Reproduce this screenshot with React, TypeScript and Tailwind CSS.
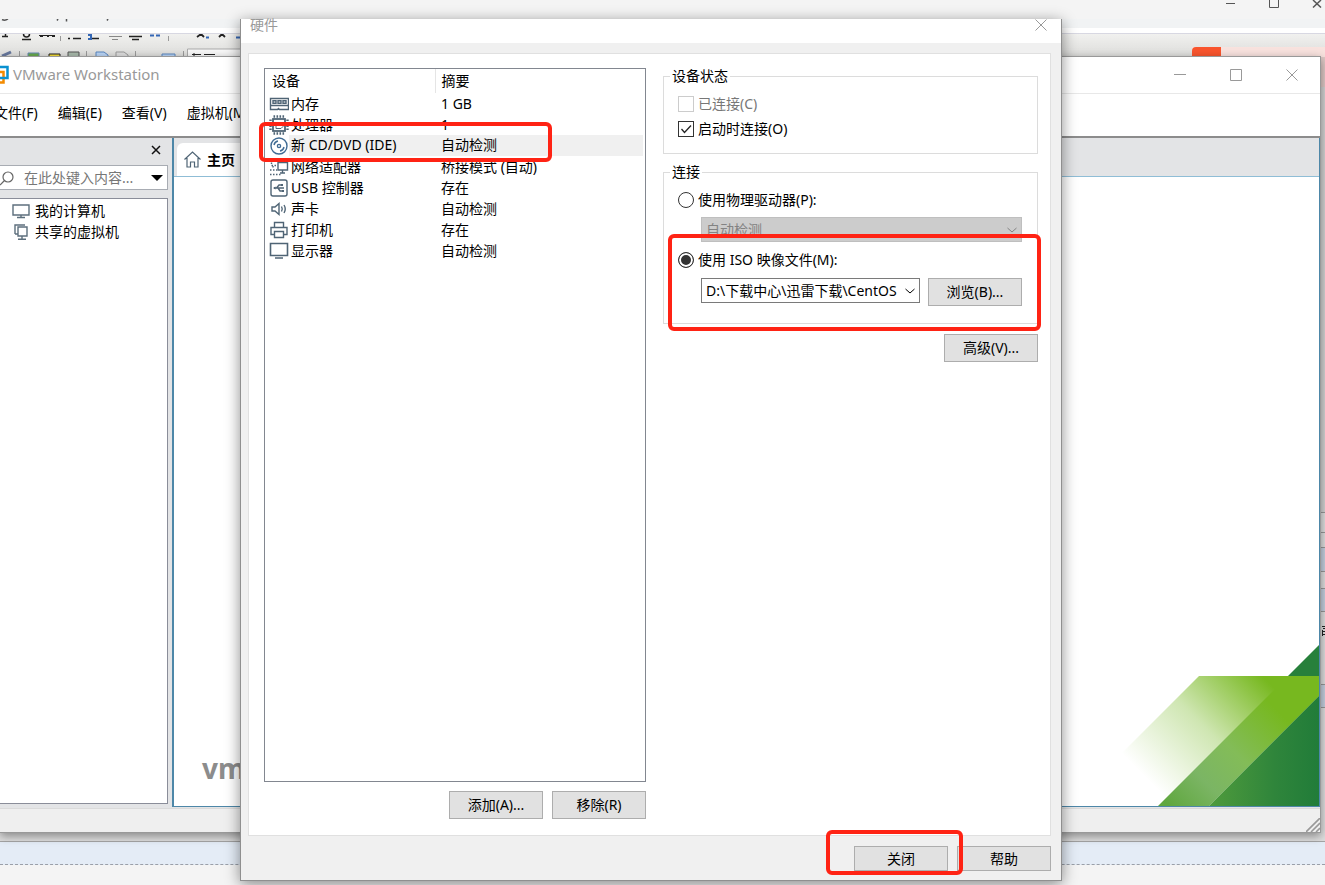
import type { ReactNode } from "react";

type Device = { name: string; summary: string; icon: ReactNode };

function Icon({ children }: { children: ReactNode }) {
  return (
    <svg
      className="w-5 h-5 shrink-0"
      viewBox="0 0 20 20"
      fill="none"
      stroke="#4f6475"
      strokeWidth="1.4"
    >
      {children}
    </svg>
  );
}

const devices: Device[] = [
  {
    name: "内存",
    summary: "1 GB",
    icon: (
      <Icon>
        <path d="M1.5 4.5h18v7h-18zM1.5 11.5v4h7l1-1 1 1h9v-4" />
        <path d="M4 6.7h3v2.6H4zM9 6.7h3v2.6H9zM14 6.7h3v2.6h-3z" />
      </Icon>
    ),
  },
  {
    name: "处理器",
    summary: "1",
    icon: (
      <Icon>
        <rect x="4" y="4" width="12" height="12" strokeWidth="1.8" />
        <path d="M7 7.5h7v4l-2 2H7z" strokeWidth="1" />
        <path
          d="M4.5 1.5h12M4.5 18.5h12M1.5 4.5v12M18.5 4.5v12"
          strokeWidth="2.4"
          strokeDasharray="1.6 1.4"
        />
      </Icon>
    ),
  },
  {
    name: "新 CD/DVD (IDE)",
    summary: "自动检测",
    icon: (
      <Icon>
        <circle cx="10" cy="10" r="8" stroke="#3f6b94" />
        <circle cx="10" cy="10" r="1.6" stroke="#3f6b94" />
        <path d="M5 9a5 5 0 0 1 4-4M11 15a5 5 0 0 0 4-4" stroke="#3f6b94" />
      </Icon>
    ),
  },
  {
    name: "网络适配器",
    summary: "桥接模式 (自动)",
    icon: (
      <Icon>
        <path d="M9 5.5h9.500v7.500h-9.500zM13.500 13v3M11 16h5" />
        <path d="M2.500 2.500h9v3M2.500 2.500v6h6" strokeDasharray="1.5 1.5" />
        <path d="M4 9v2M1 13h7M1 17.500h11" strokeDasharray="1.5 1.5" />
      </Icon>
    ),
  },
  {
    name: "USB 控制器",
    summary: "存在",
    icon: (
      <Icon>
        <rect x="2" y="2" width="16" height="16" rx="2" />
        <path d="M5 10h10M7.5 10l2.5-3h2.500M9 10l2 3h2.500" />
        <path d="M4 10l2.500-1.500v3zM12 6h2v2h-2zM13 12h2v2h-2z" fill="#4f6475" stroke="none" />
      </Icon>
    ),
  },
  {
    name: "声卡",
    summary: "自动检测",
    icon: (
      <Icon>
        <path d="M3 8h3l4-3.500v11L6 12H3zM12.500 7.500q1.500 2.500 0 5M15 6q2.500 4 0 8" />
      </Icon>
    ),
  },
  {
    name: "打印机",
    summary: "存在",
    icon: (
      <Icon>
        <path d="M5.500 7.500v-5h9v5M5.500 14.500h-3.500v-7h16v7h-3.500M5.500 11.500h9v6h-9z" />
      </Icon>
    ),
  },
  {
    name: "显示器",
    summary: "自动检测",
    icon: (
      <Icon>
        <path d="M1.500 2.500h17v12h-17zM6 17h8" strokeWidth="1.600" />
      </Icon>
    ),
  },
];

function PushButton({
  children,
  small = false,
}: {
  children: ReactNode;
  small?: boolean;
}) {
  return (
    <button
      className={`w-[94px] shrink-0 bg-[#e1e1e1] border border-[#adadad] flex items-center justify-center ${
        small ? "h-[25px]" : "h-7"
      }`}
    >
      {children}
    </button>
  );
}

function Chevron() {
  return (
    <svg
      className="absolute right-1 top-[9px] w-3 h-2 pointer-events-none"
      viewBox="0 0 12 8"
      fill="none"
      stroke="currentColor"
    >
      <path d="M1.500 2l4.500 4 4.500-4" />
    </svg>
  );
}

function Cross({ className }: { className: string }) {
  return (
    <svg className={className} viewBox="0 0 12 12" fill="none" stroke="currentColor">
      <path d="M0.500 0.500l11 11M11.500 0.500l-11 11" />
    </svg>
  );
}

// Browser page and editor toolbar behind the windows
function Backdrop() {
  return (
    <div className="h-screen flex flex-col bg-[#dedede]">
      <div className="h-[19px] shrink-0 bg-[#f4f4f4] flex justify-end gap-8 pr-[3px] text-[#555] overflow-hidden">
        <button aria-label="最小化" className="h-[7px]">
          <svg className="w-3 h-[7px]" viewBox="0 0 12 7">
            <path d="M2 3.500h9" stroke="currentColor" />
          </svg>
        </button>
        <button aria-label="最大化" className="h-2">
          <svg className="w-3 h-2" viewBox="0 0 12 8" fill="none" stroke="currentColor">
            <path d="M1.500 0v7.500h9v-7.500" />
          </svg>
        </button>
        <button aria-label="关闭" className="h-2">
          <svg className="w-[10px] h-2" viewBox="0 0 10 8" stroke="currentColor" strokeWidth="1.500">
            <path d="M1 0l8 7.500M9 0l-8 7.500" />
          </svg>
        </button>
      </div>
      <div className="h-[9px] shrink-0 bg-[#f1f3f4]">
        <svg className="block w-32 h-1" viewBox="0 0 128 4" fill="none" stroke="#555" strokeWidth="1.500">
          <path d="M2 0.500q3 1.500 6-0.500M58 0l-1 1.500M66.500 0v2.500M108 0l-1 1.500" />
        </svg>
      </div>
      <div className="h-[6px] shrink-0 bg-white border-b border-[#d8d8e2]" />
      <div className="h-[23px] shrink-0 bg-linear-to-b from-[#f1f1ef] to-[#dcdcda] flex justify-between">
        <svg className="w-[241px] h-[23px]" viewBox="0 0 241 23" fill="none" stroke="#222">
          <path d="M2 2.500h6M5.500 0v3M23.500 0q0 3 3 3t3-3M22 5.500h9" strokeWidth="1.500" />
          <path d="M39 1.500h16M40 2.500h3M47 2.500h2M52 2.500h3" />
          <path d="M60.500 2v5M168.500 2v5M86.500 17v6M135.500 17v6M183.500 17v6M19.500 17v6" stroke="#999" />
          <path d="M68 4.500h2M73 4.500h8M90 4.500h9M129 2.500h13M132 5.500h7" strokeWidth="1.500" />
          <path d="M109 2.500h13M112 5.500h6" stroke="#888" />
          <path d="M197 3l4-3M204 3l-3-3M219 3l3-3 3 3" strokeWidth="1.800" />
          <path d="M88 1h3v4h-3M150 1.500h4M156 1.500h4M206 3.500h3M236 3.500h5" stroke="#3467b5" strokeWidth="2" />
          <path d="M2 22l9-4" stroke="#66779c" strokeWidth="3" />
          <path d="M28 19h11v4h-11z" fill="#67a94b" stroke="#6688b4" />
          <path d="M49 20h11v3h-11z" fill="#f4dc39" />
          <path d="M68 18h11v5h-11z" fill="#a8b9ab" stroke="#555" />
          <path d="M96 23v-5h8l4 3v2M162 23v-3h13v3" fill="#b9d4f5" stroke="#5a86bf" />
          <path d="M116 23v-5h8l4 3v2" fill="#ddd" stroke="#999" />
          <path d="M141 22.500h16" stroke="#777" strokeDasharray="3 1" />
          <path d="M187.500 23v-8h54v8" fill="#f8f8f8" stroke="#aaa" />
          <path d="M192 20.500h9M194 19v4M194 22.500h6M204 20.500h11M206 22.500h8" />
        </svg>
        <div className="self-end w-[133px] h-[10px] flex bg-[#f8e2de]">
          <div className="w-[29px] bg-[#f9552e] rounded-tl" />
        </div>
      </div>
      <div className="flex-1 flex flex-col items-end">
        <div className="w-1 h-[30px] bg-[#dfc9c6]" />
        <div className="w-1 flex-1 bg-[#d2d2d2]" />
        <div className="w-1 h-5 border-t border-[#999]" />
        <div className="w-1 h-4 border-y border-[#999]" />
        <div className="w-1 h-6 bg-[#c5d0df] border-b border-[#999]" />
        <div className="w-1 h-4" />
        <div className="w-1 h-6 bg-[#c5d0df] border-y border-[#999]" />
        <svg className="w-1 h-[72px]" viewBox="0 0 4 72" stroke="#222">
          <path d="M1 14.500h3M2 16.500h2M1 19.500h3M2 22.500h2M1.500 18v6" />
        </svg>
        <div className="w-1 h-6 bg-[#c5d0df] border-y border-[#999]" />
        <div className="w-1 h-[133px]" />
      </div>
      <div className="h-px shrink-0 bg-[#a5a5a5]" />
      <div className="h-[23px] shrink-0 bg-[#e4ecf6] border-b border-dashed border-[#9a9fa8]" />
      <div className="h-5 shrink-0 bg-[#f4f4f4]" />
    </div>
  );
}

function GreenCorner() {
  return (
    <svg className="w-[200px] h-[161px]" viewBox="0 0 200 161">
      <defs>
        <linearGradient id="light" gradientUnits="userSpaceOnUse" x1="24" y1="130" x2="133" y2="21">
          <stop offset="0" stopColor="#fff" />
          <stop offset="0.5" stopColor="#cfe6b2" />
          <stop offset="1" stopColor="#77b81f" />
        </linearGradient>
        <linearGradient id="band" gradientUnits="userSpaceOnUse" x1="50" y1="161" x2="170" y2="41">
          <stop offset="0" stopColor="#60a73f" />
          <stop offset="0.25" stopColor="#7bb564" />
          <stop offset="0.5" stopColor="#83bc58" />
          <stop offset="0.85" stopColor="#77b81f" />
        </linearGradient>
        <linearGradient id="dark" gradientUnits="userSpaceOnUse" x1="90" y1="0" x2="200" y2="0">
          <stop offset="0" stopColor="#4f9b3c" />
          <stop offset="0.6" stopColor="#2f853b" />
          <stop offset="1" stopColor="#217c39" />
        </linearGradient>
      </defs>
      <path d="M169 31l31-31v31z" fill="#27803b" />
      <path d="M80 31h120v20l-110 110h-140z" fill="url(#light)" />
      <path d="M39 161l130-130h31v20l-110 110z" fill="url(#band)" />
      <path d="M90 161l110-110v110z" fill="url(#dark)" />
    </svg>
  );
}

function MainWindow() {
  return (
    <div className="absolute left-0 right-1 top-14 bottom-[52px] flex flex-col bg-white border-t border-r border-b border-[#999] shadow-[0_3px_9px_rgba(0,0,0,0.4)]">
      <header className="h-[37px] shrink-0 flex items-center border-b border-[#e8e8e8] text-[#999]">
        <svg className="w-[9px] h-5 mr-1" viewBox="0 0 9 20" fill="none">
          <path d="M0 7h3.500v10.500h-3.500" stroke="#f38b00" strokeWidth="2.500" />
          <path d="M0 2h7.500v11h-7.500" stroke="#0a91d0" strokeWidth="2.500" />
        </svg>
        <h1 className="flex-1 text-[15px]">VMware Workstation</h1>
        <div className="flex gap-11 pr-[22px]">
          <button aria-label="最小化">
            <svg className="w-3 h-3" viewBox="0 0 12 12" stroke="currentColor">
              <path d="M0 5.500h12" />
            </svg>
          </button>
          <button aria-label="最大化">
            <svg className="w-3 h-3" viewBox="0 0 12 12" fill="none" stroke="currentColor">
              <path d="M0.500 0.500h11v11h-11z" />
            </svg>
          </button>
          <button aria-label="关闭">
            <Cross className="w-3 h-3" />
          </button>
        </div>
      </header>
      <nav className="h-[42px] shrink-0 flex items-center gap-5 -ml-[6px] pb-1">
        <button>文件(F)</button>
        <button>编辑(E)</button>
        <button>查看(V)</button>
        <button>虚拟机(M)</button>
      </nav>
      <div className="flex-1 flex bg-[#e3e4e6] border-t-2 border-[#8c8c8c]">
        <aside className="w-[172px] shrink-0 pr-1 pb-1 flex flex-col">
          <div className="h-[27px] flex items-center justify-end pr-[7px] pb-[3px]">
            <button aria-label="关闭">
              <svg className="w-[10px] h-[10px]" viewBox="0 0 10 10" stroke="#111" strokeWidth="1.500">
                <path d="M1 1l8 8M9 1l-8 8" />
              </svg>
            </button>
          </div>
          <div className="h-[25px] flex items-center gap-2 bg-white border border-l-0 border-[#a8acb3] pr-1">
            <svg className="w-4 h-4 shrink-0" viewBox="0 0 16 16" fill="none" stroke="#666" strokeWidth="1.200">
              <circle cx="8" cy="7" r="5" />
              <path d="M4.500 10.500l-4.500 4.500" />
            </svg>
            <input
              aria-label="搜索"
              placeholder="在此处键入内容..."
              className="flex-1 min-w-0 outline-none placeholder:text-[#777]"
            />
            <svg className="w-3 h-[6px] shrink-0" viewBox="0 0 12 6">
              <path d="M0 0h12l-6 6z" />
            </svg>
          </div>
          <ul className="mt-2 flex-1 bg-white border border-l-0 border-[#8a8d99] pt-px">
            <li className="h-[21px] flex items-center gap-[5px] pl-3">
              <svg className="w-[18px] h-4" viewBox="0 0 18 16" fill="none" stroke="#5d6f7d" strokeWidth="1.400">
                <path d="M1 2h16v10h-16zM9 12v2.500M5 14.500h8" />
              </svg>
              我的计算机
            </li>
            <li className="h-[21px] flex items-center gap-[5px] pl-3">
              <svg className="w-[18px] h-4" viewBox="0 0 18 16" fill="none" stroke="#5d6f7d" strokeWidth="1.400">
                <path d="M6 3h9v9h-9zM3 10v-9h10M3 10h3M10 12v3M6 15.300h8" />
              </svg>
              共享的虚拟机
            </li>
          </ul>
        </aside>
        <main className="flex-1 flex flex-col border-l-2 border-r border-b border-[#4d87a8] mb-px">
          <div className="h-[39px] shrink-0 flex items-end border-b border-[#8fbdd6]">
            <button className="h-[33px] ml-[3px] pl-[7px] w-24 bg-white rounded-tl-md flex items-center gap-[6px] font-bold">
              <svg className="w-[17px] h-[17px]" viewBox="0 0 17 17" fill="none" stroke="#4f6475" strokeWidth="1.200">
                <path d="M0.500 8.500l8-7.500 8 7.500M3 7v9h3.500v-5h4v5h3.500v-9" />
              </svg>
              主页
            </button>
          </div>
          <div className="flex-1 bg-white flex items-end justify-between">
            <p className="pl-7 pb-5 text-[28px] leading-9 font-bold text-[#8c8c8c]">vm</p>
            <GreenCorner />
          </div>
        </main>
      </div>
      <footer className="h-6 shrink-0 bg-[#efefef] border-t border-[#dadada] flex justify-end items-end">
        <svg className="w-[14px] h-[14px]" viewBox="0 0 14 14" stroke="#999" strokeWidth="1.600">
          <path d="M0 14l14-14M5 14l9-9M10 14l4-4" />
        </svg>
      </footer>
    </div>
  );
}

function DeviceTable() {
  return (
    <div className="flex-1 border border-[#828790]">
      <table className="w-full table-fixed text-left">
        <thead>
          <tr className="h-6">
            <th className="w-[170px] pl-[7px] font-normal border-r border-[#e5e5e5]">设备</th>
            <th className="pl-[6px] font-normal">摘要</th>
          </tr>
        </thead>
        <tbody>
          {devices.map((d, i) => (
            <tr key={d.name} className="h-[21px]">
              <td className="p-0 pl-1">
                <div className="flex items-center">
                  {d.icon}
                  <span className={i === 2 ? "flex-1 h-[21px] pl-[2px] bg-[#f0f0f0]" : "pl-[2px]"}>
                    {d.name}
                  </span>
                </div>
              </td>
              <td className="p-0 pr-[2px]">
                <div className={i === 2 ? "h-[21px] pl-[6px] bg-[#f0f0f0]" : "pl-[6px]"}>
                  {d.summary}
                </div>
              </td>
            </tr>
          ))}
        </tbody>
      </table>
    </div>
  );
}

function Mark({ className }: { className: string }) {
  return (
    <div
      className={`absolute border-4 border-[#ff2314] rounded-md pointer-events-none ${className}`}
    />
  );
}

const group = "border border-[#dcdcdc] pl-[14px] pr-[15px] pt-[5px]";
const boxBase =
  "appearance-none w-4 h-4 border border-[#333] bg-white disabled:border-[#ccc]";

function HardwareDialog() {
  return (
    <div
      role="dialog"
      aria-label="硬件"
      className="absolute left-60 top-[19px] bottom-1 w-[822px] flex flex-col bg-[#f0f0f0] border border-t-0 border-[#8f8f8f] shadow-[0_3px_14px_rgba(0,0,0,0.45)]"
    >
      <header className="h-6 shrink-0 bg-white flex justify-between pl-[9px] pr-[14px] text-[#999]">
        <h2 className="h-3 leading-3">硬件</h2>
        <button aria-label="关闭" className="h-3">
          <Cross className="w-3 h-3" />
        </button>
      </header>

      <div className="flex-1 mt-[10px] ml-[7px] mr-[10px] bg-white border border-[#e0e0e0] flex gap-[17px] pl-[15px] pr-3">
        <div className="w-[382px] shrink-0 pt-[14px] pb-4 flex flex-col gap-[9px]">
          <DeviceTable />
          <div className="flex justify-end gap-[9px]">
            <PushButton>添加(A)...</PushButton>
            <PushButton>移除(R)</PushButton>
          </div>
        </div>

        <div className="flex-1 min-w-0 pt-3 flex flex-col">
          <fieldset className={`${group} pb-3`}>
            <legend className="-ml-2 px-[2px]">设备状态</legend>
            <label className="h-[25px] flex items-center gap-1 text-[#777]">
              <input type="checkbox" disabled className={boxBase} />
              已连接(C)
            </label>
            <label className="h-[25px] flex items-center gap-1">
              <span className="relative flex">
                <input type="checkbox" defaultChecked className={boxBase} />
                <svg
                  className="absolute inset-0 w-4 h-4 pointer-events-none"
                  viewBox="0 0 16 16"
                  fill="none"
                  stroke="#222"
                  strokeWidth="1.300"
                >
                  <path d="M3.500 8l3 3.500 6.500-7" />
                </svg>
              </span>
              启动时连接(O)
            </label>
          </fieldset>

          <fieldset className={`${group} mt-2 pb-[17px] flex flex-col gap-[5px]`}>
            <legend className="-ml-2 px-[2px]">连接</legend>
            <label className="h-[25px] flex items-center gap-1">
              <input type="radio" name="source" className={`${boxBase} rounded-full`} />
              使用物理驱动器(P):
            </label>
            <div className="relative ml-[23px] text-[#838383]">
              <select
                aria-label="物理驱动器"
                disabled
                className="block appearance-none w-full h-[25px] pl-1 pr-[22px] bg-[#ccc] border border-[#bfbfbf] opacity-100"
              >
                <option>自动检测</option>
              </select>
              <Chevron />
            </div>
            <label className="h-[25px] flex items-center gap-1">
              <input
                type="radio"
                name="source"
                defaultChecked
                className={`${boxBase} rounded-full checked:bg-[#333] checked:shadow-[inset_0_0_0_2px_#fff]`}
              />
              使用 ISO 映像文件(M):
            </label>
            <div className="ml-[23px] pt-px flex gap-2">
              <div className="relative flex-1 min-w-0">
                <select
                  aria-label="ISO 映像文件"
                  className="block appearance-none w-full h-[25px] pl-1 pr-[22px] bg-white border border-[#7a7a7a]"
                >
                  <option>D:\下载中心\迅雷下载\CentOS</option>
                </select>
                <Chevron />
              </div>
              <PushButton>浏览(B)...</PushButton>
            </div>
          </fieldset>

          <div className="mt-[10px] flex justify-end">
            <PushButton>高级(V)...</PushButton>
          </div>
        </div>
      </div>

      <footer className="shrink-0 flex justify-end gap-[9px] pt-[10px] pb-[9px] pr-[10px]">
        <PushButton small>关闭</PushButton>
        <PushButton small>帮助</PushButton>
      </footer>

      <Mark className="left-[18px] top-[103px] w-[293px] h-[40px]" />
      <Mark className="left-[427px] top-[215px] w-[373px] h-[97px]" />
      <Mark className="left-[585px] top-[811px] w-[137px] h-[45px]" />
    </div>
  );
}

export default function App() {
  return (
    <div className="relative min-h-screen overflow-hidden text-sm text-black font-['Noto_Sans','Noto_Sans_CJK_SC',sans-serif]">
      <Backdrop />
      <MainWindow />
      <HardwareDialog />
    </div>
  );
}
